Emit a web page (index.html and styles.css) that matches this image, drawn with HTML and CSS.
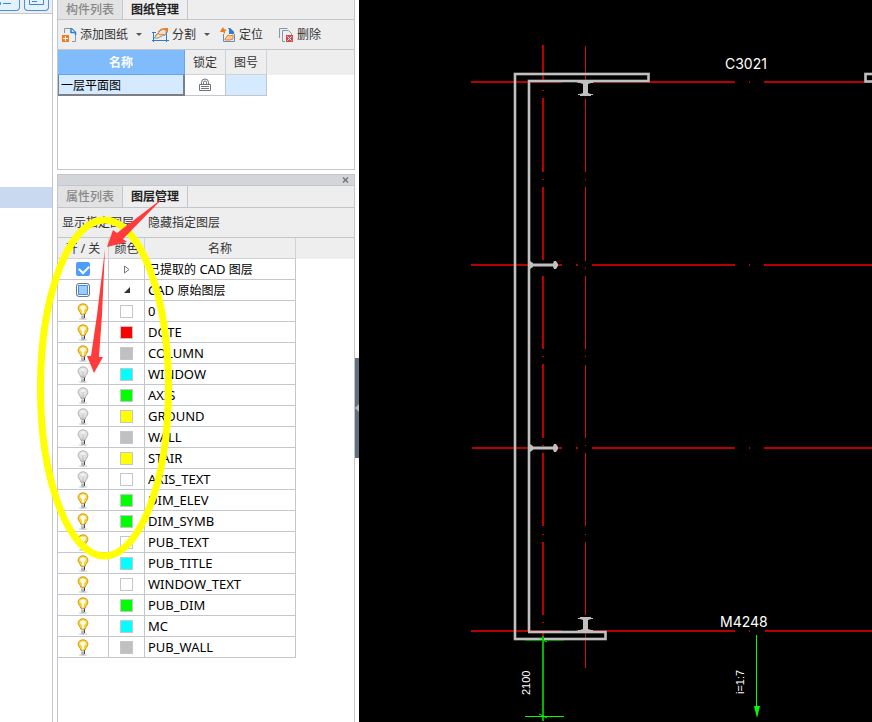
FILE: index.html
```
<!DOCTYPE html>
<html lang="zh-CN">
<head>
    <meta charset="UTF-8">
    <meta name="viewport" content="width=device-width, initial-scale=1.0">
    <title>图层管理</title>
    <link rel="stylesheet" href="styles.css">
</head>
<body>
    <!-- Shared icons -->
    <svg class="icon-defs" aria-hidden="true">
        <defs>
            <radialGradient id="dim" cx="50%" cy="35%" r="60%">
                <stop offset="0" stop-color="#f8f8f8"/>
                <stop offset="1" stop-color="#cfcfcf"/>
            </radialGradient>
        </defs>
        <symbol id="bulb-on" viewBox="0 0 12 17">
            <ellipse cx="6" cy="16" rx="4.5" ry="0.8" fill="#ccc"/>
            <path d="M6 .8C3 .8 1.1 2.8 1.1 5.2c0 2.500 2.300 3.500 2.700 6h4.400c.4-2.500 2.700-3.500 2.700-6C10.900 2.800 9 .8 6 .8z" fill="#fbd23c" stroke="#d39a12"/>
            <path d="M3.300 3.500q2.700-2 5.400 0v1.800L7 7.200v3.300H5V7.200L3.300 5.300z" fill="#fffdf0"/>
            <path d="M4 11.500h4v3.300l-1 1H5l-1-1z" fill="#999"/>
            <path d="M4 12.500h3M4 14h3" stroke="#eee" stroke-width=".8"/>
            <path d="M7.500 11.500v3.500" stroke="#444"/>
        </symbol>
        <symbol id="bulb-off" viewBox="0 0 12 17">
            <ellipse cx="6" cy="16" rx="4.5" ry="0.8" fill="#ccc"/>
            <path d="M6 .8C3 .8 1.1 2.800 1.1 5.200c0 2.500 2.300 3.500 2.700 6h4.400c.4-2.500 2.700-3.500 2.700-6C10.900 2.800 9 .8 6 .8z" fill="url(#dim)" stroke="#b4b4b4"/>
            <path d="M4.500 5l1.500 1.500L7.500 5M6 6.500V11" fill="none" stroke="#b8b8b8" stroke-width=".7"/>
            <path d="M4 11.500h4v3.300l-1 1H5l-1-1z" fill="#999"/>
            <path d="M4 12.500h3M4 14h3" stroke="#eee" stroke-width=".8"/>
            <path d="M7.500 11.500v3.500" stroke="#444"/>
        </symbol>
    </svg>

    <div class="app">
        <aside class="nav">
            <div class="nav-bar">
                <button class="nav-btn" aria-label="列表">
                    <svg width="22" height="10" viewBox="0 0 22 10"><path d="M2.500 2.500h2v2h-2zM7 3.500h8" fill="none" stroke="#3d86d8"/></svg>
                </button>
                <button class="nav-btn" aria-label="详图">
                    <svg width="22" height="10" viewBox="0 0 22 10"><path d="M4.500 0v4.500h14V0M7 1.500h5" fill="none" stroke="#3d86d8"/></svg>
                </button>
            </div>
            <div class="nav-list">
                <div class="nav-selected"></div>
            </div>
        </aside>

        <div class="panels">
            <section class="panel drawings">
                <div class="tabs">
                    <button class="tab">构件列表</button>
                    <button class="tab active">图纸管理</button>
                </div>
                <div class="toolbar">
                    <button class="tool">
                        <svg width="15" height="16" viewBox="0 0 15 16">
                            <path d="M2.500 6V1.500h7l4 4v9H10" fill="none" stroke="#8797a5"/>
                            <path d="M9 1v4.500h4.500V8" fill="none" stroke="#2f7fd0" stroke-width="1.500"/>
                            <path d="M9 1h1l4 4v1z" fill="#2f7fd0"/>
                            <rect y="8" width="7" height="7" fill="#ee7d20"/>
                            <path d="M3.500 9v5M1 11.500h5" stroke="#fff"/>
                        </svg>
                        添加图纸
                        <span class="caret"></span>
                    </button>
                    <button class="tool">
                        <svg width="17" height="16" viewBox="0 0 17 16">
                            <path d="M1.500 5v10M14.500 5v10M0 5.500h4M0 13.500h17" fill="none" stroke="#2f7fd0"/>
                            <path d="M2 11l7-8 5-1v5l-8 4z" fill="#fbe1cc" stroke="#8797a5"/>
                            <path d="M3 9l3-3 2 2 3-1 2 2M6 5l3-3h3" fill="none" stroke="#ee7d20"/>
                            <path d="M11 1h5v5z" fill="#ee7d20"/>
                        </svg>
                        分割
                        <span class="caret"></span>
                    </button>
                    <button class="tool">
                        <svg width="16" height="16" viewBox="0 0 16 16">
                            <path d="M3.500 7v7.500h11V7M8 1.500h2l4 4" fill="none" stroke="#5f8fc4"/>
                            <path d="M9 1h1l4 4v2H9z" fill="#2f7fd0"/>
                            <path d="M3 0l1 2 3 1-2 1 0 3-2-2-3 0 1-2z" fill="#ee7d20"/>
                            <path d="M5 12l3-4 2 1 3-1v4l-3 1H5z" fill="#fbd0ae" stroke="#ee7d20"/>
                        </svg>
                        定位
                    </button>
                    <button class="tool delete">
                        <svg width="15" height="16" viewBox="0 0 15 16">
                            <path d="M.5 11V1.500h8M6 14.500H3.500v-11h6l3 3V8" fill="none" stroke="#8797a5"/>
                            <rect x="7" y="8" width="7" height="7" fill="#cf4b51"/>
                            <path d="M8.500 9.500l4 4M12.500 9.500l-4 4" stroke="#fff"/>
                        </svg>
                        删除
                    </button>
                </div>
                <div class="grid-area">
                    <table class="drawing-table">
                        <thead>
                            <tr><th class="sorted">名称</th><th>锁定</th><th>图号</th></tr>
                        </thead>
                        <tbody>
                            <tr>
                                <td class="current">一层平面图</td>
                                <td class="center">
                                    <button class="icon-btn" aria-label="锁定">
                                        <svg width="12" height="14" viewBox="0 0 12 14">
                                            <path d="M2.500 6V4.500a3.500 3.500 0 0 1 7 0V6M4.500 6V4.500a1.500 1.500 0 0 1 3 0V6M.5 6.500h11v6H.5zM2 8.500h8M2 10.500h8" fill="none" stroke="#707478"/>
                                        </svg>
                                    </button>
                                </td>
                                <td class="number"></td>
                            </tr>
                        </tbody>
                    </table>
                </div>
            </section>

            <section class="panel layers">
                <div class="title-bar">
                    <button class="icon-btn" aria-label="关闭">
                        <svg width="7" height="6" viewBox="0 0 7 6"><path d="M1 .5l5 5M6 .5l-5 5" stroke="#777" stroke-width="1.500"/></svg>
                    </button>
                </div>
                <div class="tabs">
                    <button class="tab">属性列表</button>
                    <button class="tab active">图层管理</button>
                </div>
                <div class="toolbar text-only">
                    <button class="tool">显示指定图层</button>
                    <button class="tool">隐藏指定图层</button>
                </div>
                <div class="grid-area">
                    <table class="layer-table">
                        <thead>
                            <tr><th>开 / 关</th><th>颜色</th><th>名称</th></tr>
                        </thead>
                        <tbody>
                            <tr>
                                <td><input type="checkbox" class="check" id="extracted" checked></td>
                                <td><button class="icon-btn" aria-label="展开"><svg width="8" height="9" viewBox="0 0 8 9"><path d="M1.500 1v7l4.500-3.500z" fill="#fff" stroke="#777"/></svg></button></td>
                                <td><label for="extracted">已提取的<span class="latin"> CAD </span>图层</label></td>
                            </tr>
                            <tr>
                                <td><input type="checkbox" class="check partial" id="original"></td>
                                <td><button class="icon-btn" aria-label="折叠"><svg width="8" height="9" viewBox="0 0 8 9"><path d="M7 1v6H1z" fill="#333"/></svg></button></td>
                                <td><label for="original"><span class="latin">CAD </span>原始图层</label></td>
                            </tr>
                            <tr><td><button class="icon-btn" aria-label="关闭图层 0"><svg width="12" height="17"><use href="#bulb-on"/></svg></button></td><td><span class="swatch white"></span></td><td>0</td></tr>
                            <tr><td><button class="icon-btn" aria-label="关闭图层 DOTE"><svg width="12" height="17"><use href="#bulb-on"/></svg></button></td><td><span class="swatch red"></span></td><td>DOTE</td></tr>
                            <tr><td><button class="icon-btn" aria-label="关闭图层 COLUMN"><svg width="12" height="17"><use href="#bulb-on"/></svg></button></td><td><span class="swatch gray"></span></td><td>COLUMN</td></tr>
                            <tr><td><button class="icon-btn" aria-label="打开图层 WINDOW"><svg width="12" height="17"><use href="#bulb-off"/></svg></button></td><td><span class="swatch cyan"></span></td><td>WINDOW</td></tr>
                            <tr><td><button class="icon-btn" aria-label="打开图层 AXIS"><svg width="12" height="17"><use href="#bulb-off"/></svg></button></td><td><span class="swatch green"></span></td><td>AXIS</td></tr>
                            <tr><td><button class="icon-btn" aria-label="打开图层 GROUND"><svg width="12" height="17"><use href="#bulb-off"/></svg></button></td><td><span class="swatch yellow"></span></td><td>GROUND</td></tr>
                            <tr><td><button class="icon-btn" aria-label="打开图层 WALL"><svg width="12" height="17"><use href="#bulb-off"/></svg></button></td><td><span class="swatch gray"></span></td><td>WALL</td></tr>
                            <tr><td><button class="icon-btn" aria-label="打开图层 STAIR"><svg width="12" height="17"><use href="#bulb-off"/></svg></button></td><td><span class="swatch yellow"></span></td><td>STAIR</td></tr>
                            <tr><td><button class="icon-btn" aria-label="打开图层 AXIS_TEXT"><svg width="12" height="17"><use href="#bulb-off"/></svg></button></td><td><span class="swatch white"></span></td><td>AXIS_TEXT</td></tr>
                            <tr><td><button class="icon-btn" aria-label="关闭图层 DIM_ELEV"><svg width="12" height="17"><use href="#bulb-on"/></svg></button></td><td><span class="swatch green"></span></td><td>DIM_ELEV</td></tr>
                            <tr><td><button class="icon-btn" aria-label="关闭图层 DIM_SYMB"><svg width="12" height="17"><use href="#bulb-on"/></svg></button></td><td><span class="swatch green"></span></td><td>DIM_SYMB</td></tr>
                            <tr><td><button class="icon-btn" aria-label="关闭图层 PUB_TEXT"><svg width="12" height="17"><use href="#bulb-on"/></svg></button></td><td><span class="swatch white"></span></td><td>PUB_TEXT</td></tr>
                            <tr><td><button class="icon-btn" aria-label="关闭图层 PUB_TITLE"><svg width="12" height="17"><use href="#bulb-on"/></svg></button></td><td><span class="swatch cyan"></span></td><td>PUB_TITLE</td></tr>
                            <tr><td><button class="icon-btn" aria-label="关闭图层 WINDOW_TEXT"><svg width="12" height="17"><use href="#bulb-on"/></svg></button></td><td><span class="swatch white"></span></td><td>WINDOW_TEXT</td></tr>
                            <tr><td><button class="icon-btn" aria-label="关闭图层 PUB_DIM"><svg width="12" height="17"><use href="#bulb-on"/></svg></button></td><td><span class="swatch green"></span></td><td>PUB_DIM</td></tr>
                            <tr><td><button class="icon-btn" aria-label="关闭图层 MC"><svg width="12" height="17"><use href="#bulb-on"/></svg></button></td><td><span class="swatch cyan"></span></td><td>MC</td></tr>
                            <tr><td><button class="icon-btn" aria-label="关闭图层 PUB_WALL"><svg width="12" height="17"><use href="#bulb-on"/></svg></button></td><td><span class="swatch gray"></span></td><td>PUB_WALL</td></tr>
                        </tbody>
                    </table>
                </div>
            </section>
        </div>

        <div class="splitter">
            <button class="handle" aria-label="收起">
                <svg width="4" height="8" viewBox="0 0 4 8"><path d="M4 0v8L0 4z" fill="#b4bac0"/></svg>
            </button>
        </div>

        <main class="canvas">
            <svg class="drawing" viewBox="359 0 513 722" preserveAspectRatio="xMinYMin slice">
                <!-- Axis grid -->
                <g class="axis">
                    <path d="M471 82H562M576 82h2M592 82H735M749 82h1M764 82H872"/>
                    <path d="M471 265H562M576 265h2M592 265H735M749 265h1M764 265H872"/>
                    <path d="M472 448H562M576 448h2M592 448H735M749 448h1M764 448H872"/>
                    <path d="M471 631H562M576 631h2M592 631H735M749 631h1M765 631H872"/>
                    <path d="M543 45V83M543 90v1M543 98V172M543 179v1M543 187V260M543 276V349M543 356v1M543 364V438M543 445v1M543 453V526M543 534v1M543 542V615M543 622v1M543 630V640"/>
                    <path class="thin" d="M585.500 46V82M585.500 99V172M585.500 179v1M585.500 187V261M585.500 268v1M585.500 276V349M585.500 356v1M585.500 365V438M585.500 445v1M585.500 453V526M585.500 534v1M585.500 542V615M585.500 632V668"/>
                </g>
                <!-- Walls -->
                <path class="wall-edge" d="M529 631.500V81H648.500V74H515V639H605.500V632H528M872 74H865.500V81.500H872"/>
                <path class="wall" d="M529 631V81H648.500V74H515V639H605.500V632H528M872 74H865.500V81.500H872"/>
                <!-- Columns and studs -->
                <g class="column">
                    <path d="M578 81h15v2h-2l-3 1v9l3 1h2v1h-2v1h-11v-1h-2v-1h2l3-1v-9l-3-1h-2z"/>
                    <path d="M578 632h15v-2h-2l-3-1v-9l3-1h2v-1h-2v-1h-11v1h-2v1h2l3 1v9l-3 1h-2z"/>
                    <path d="M530 261l3 2v.5h20l1-2.500h2l2 3v2l-2 3h-2l-1-2.500h-20v.5l-3 2z"/>
                    <path d="M530 444l3 2v.5h20l1-2.500h2l2 3v2l-2 3h-2l-1-2.500h-20v.5l-3 2z"/>
                </g>
                <!-- Dimensions -->
                <g class="dim">
                    <path class="main" d="M543 636V721"/>
                    <path class="dark" d="M525 640.500H564"/>
                    <path d="M525 716.500H564M539 638l8 4M539 714l8 4M756.500 635V708"/>
                    <path class="head" d="M754 706h6l-3 12z"/>
                </g>
                <g class="cad-text">
                    <text x="725" y="69">C3021</text>
                    <text x="720" y="627">M4248</text>
                    <text class="small" transform="translate(530 695) rotate(-90)">2100</text>
                    <text class="small" transform="translate(744 694) rotate(-90)">i=1:7</text>
                </g>
            </svg>
        </main>

        <svg class="markup" width="210" height="600" viewBox="0 0 210 600" aria-hidden="true">
            <ellipse cx="104.500" cy="388" rx="64" ry="168" fill="none" stroke="#ff0" stroke-width="7"/>
            <path d="M163 198L117 233L113 230L107 247L127 242L123 239z" fill="#ff3b3b"/>
            <path d="M105 249L97 315L91 356L87 356L94 373L103 357L99 357L102 315z" fill="#ff3b3b"/>
        </svg>
    </div>
</body>
</html>
```
FILE: styles.css
```
* {
    box-sizing: border-box;
}
body {
    margin: 0;
    font-family: "Noto Sans", "Noto Sans CJK SC", sans-serif;
    font-size: 12px;
    line-height: 16px;
    color: #333;
    background: white;
}
button {
    font: inherit;
    color: inherit;
    background: none;
    border: none;
    padding: 0;
    cursor: pointer;
}
svg {
    display: block;
}
.icon-defs {
    position: absolute;
    width: 0;
    height: 0;
}
.app {
    position: relative;
    display: flex;
    height: 100vh;
    overflow: hidden;
}

/* Left navigation */
.nav {
    width: 53px;
    flex-shrink: 0;
    border-right: 1px solid #c3c6cc;
    overflow: hidden;
}
.nav-bar {
    display: flex;
    justify-content: flex-end;
    gap: 4px;
    height: 14px;
    padding-right: 3px;
    background: #eee;
    border-bottom: 1px solid #c3c6cc;
}
.nav-btn {
    width: 25px;
    height: 11px;
    flex-shrink: 0;
    background: #e4f1ff;
    border: 1px solid #4a90e0;
    border-top: none;
    border-radius: 0 0 4px 4px;
}
.nav-list {
    padding-top: 173px;
}
.nav-selected {
    height: 21px;
    background: #c9d9f0;
}

/* Docked panels */
.panels {
    display: flex;
    flex-direction: column;
    gap: 4px;
    width: 298px;
    flex-shrink: 0;
    margin-left: 4px;
}
.panel {
    display: flex;
    flex-direction: column;
    border: 1px solid #c3c6cc;
}
.drawings {
    height: 170px;
    border-top: none;
}
.layers {
    flex: 1;
    border-bottom: none;
}
.title-bar {
    display: flex;
    align-items: center;
    justify-content: flex-end;
    height: 11px;
    padding-right: 5px;
    background: #d4d5da;
    border-bottom: 1px solid #c3c6cc;
}
.tabs {
    display: flex;
    height: 22px;
    background: #eee;
    border-bottom: 1px solid #c3c6cc;
}
.drawings .tabs {
    height: 20px;
}
.tab {
    width: 65px;
    padding-top: 1px;
    background: #e2e2e2;
    border-right: 1px solid #c3c6cc;
    color: #888;
    font-weight: 500;
}
.tab.active {
    background: #eee;
    color: #222;
    font-weight: 700;
}
.toolbar {
    display: flex;
    align-items: center;
    gap: 10px;
    height: 30px;
    padding: 0 4px;
    background: #eee;
    border-bottom: 1px solid #c3c6cc;
}
.toolbar.text-only {
    gap: 14px;
}
.tool {
    display: flex;
    align-items: center;
    gap: 3px;
    white-space: nowrap;
}
.tool.delete {
    margin-left: 6px;
}
.caret {
    margin-left: 5px;
    border: 3px solid transparent;
    border-top-color: #555;
    border-bottom: none;
}

/* Tables */
.grid-area {
    flex: 1;
    background: linear-gradient(#eee 25px, white 25px);
}
.layers .grid-area {
    background: linear-gradient(#eee 21px, white 21px);
}
table {
    border-collapse: separate;
    border-spacing: 0;
    table-layout: fixed;
}
th {
    padding: 2px 0 0;
    background: #eee;
    border-right: 1px solid #d0d2d6;
    border-bottom: 1px solid #d0d2d6;
    font-weight: 400;
}
td {
    height: 21px;
    padding: 0 3px;
    border-right: 1px solid #c3c6cc;
    border-bottom: 1px solid #c3c6cc;
    color: #000;
    white-space: nowrap;
}
.drawing-table {
    width: 209px;
}
.drawing-table th {
    width: 41px;
    height: 25px;
}
.drawing-table th.sorted {
    width: 127px;
    background: #80bbfb;
    border-color: #64a5ec;
    color: white;
    font-weight: 700;
}
.drawing-table .current {
    background: #d5e9ff;
    border: 2px solid #7c7f84;
    border-top: none;
    border-left: 1px solid #7c7f84;
    padding: 2px 3px 0 2px;
}
.drawing-table .number {
    background: #d5e9ff;
}
.layer-table {
    width: 238px;
}
.layer-table th {
    width: 151px;
    height: 21px;
}
.layer-table th:nth-child(1) {
    width: 51px;
}
.layer-table th:nth-child(2) {
    width: 36px;
}
.layer-table td {
    font-size: 13px;
}
.layer-table label {
    display: block;
    font-size: 12px;
}
.layer-table .latin {
    font-size: 13px;
}
.icon-btn,
.swatch,
.check {
    display: block;
    margin: 0 auto;
}
.title-bar .icon-btn {
    margin: 0;
}
.swatch {
    width: 13px;
    height: 13px;
    border: 1px solid #c3c6cc;
}
.white {
    background: white;
}
.red {
    background: #f00;
}
.gray {
    background: silver;
}
.cyan {
    background: #0ff;
}
.green {
    background: #0f0;
}
.yellow {
    background: #ff0;
}
.check {
    appearance: none;
    width: 14px;
    height: 14px;
    border-radius: 2px;
}
.check:checked {
    background: #4d9dfa;
}
.check:checked::before {
    content: "";
    display: block;
    width: 8px;
    height: 5px;
    margin: 3px;
    border: solid white;
    border-width: 0 0 2px 2px;
    transform: rotate(-45deg);
}
.check.partial {
    background: #9ccbff;
    border: 1px solid #777;
    border-radius: 3px;
    box-shadow: inset 0 0 0 1px white, inset 0 0 0 2px #3f8fec;
}

/* Splitter */
.splitter {
    display: flex;
    align-items: center;
    width: 4px;
    flex-shrink: 0;
    padding-top: 94px;
}
.handle {
    width: 4px;
    height: 100px;
    background: #62707b;
}

/* CAD view */
.canvas {
    flex: 1;
    min-width: 0;
    background: black;
}
.drawing {
    width: 100%;
    height: 100%;
}
.axis path {
    stroke: #b80000;
    stroke-width: 2;
}
.axis .thin {
    stroke: #d01010;
    stroke-width: 1;
}
.wall-edge {
    fill: none;
    stroke: #777;
    stroke-width: 3;
}
.wall {
    fill: none;
    stroke: #c0c0c0;
    stroke-width: 2;
}
.column {
    fill: #c0c0c0;
}
.dim path {
    stroke: #0f0;
}
.dim .main {
    stroke: #00b400;
    stroke-width: 2;
}
.dim .dark {
    stroke: #009000;
}
.dim .head {
    fill: #0f0;
    stroke: none;
}
.cad-text {
    fill: white;
    font-family: Inter, sans-serif;
    font-size: 14px;
    font-weight: 400;
}
.cad-text .small {
    font-family: "Liberation Sans", sans-serif;
    font-size: 11px;
}

/* Hand-drawn marks over the panels */
.markup {
    position: absolute;
    top: 0;
    left: 0;
    pointer-events: none;
}
```
